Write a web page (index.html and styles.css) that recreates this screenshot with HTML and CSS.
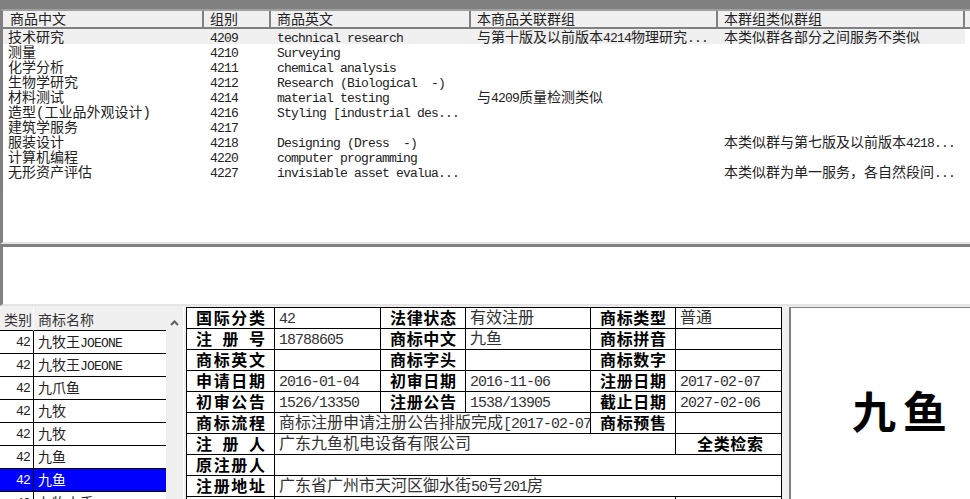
FILE: index.html
```html
<!DOCTYPE html>
<html>
<head>
<title>商标查询</title>
<link rel="stylesheet" href="styles.css">
</head>
<body>

  <div class="title-bar"></div>

  <div class="group-list">
    <div class="group-row group-head">
      <div>商品中文</div>
      <div>组别</div>
      <div>商品英文</div>
      <div>本商品关联群组</div>
      <div>本群组类似群组</div>
      <div></div>
    </div>
    <div class="group-row current">
      <div>技术研究</div>
      <div class="en">4209</div>
      <div class="en">technical research</div>
      <div>与第十版及以前版本<span class="en">4214</span>物理研究<span class="en">...</span></div>
      <div>本类似群各部分之间服务不类似</div>
    </div>
    <div class="group-row">
      <div>测量</div><div class="en">4210</div><div class="en">Surveying</div><div></div><div></div>
    </div>
    <div class="group-row">
      <div>化学分析</div><div class="en">4211</div><div class="en">chemical analysis</div><div></div><div></div>
    </div>
    <div class="group-row">
      <div>生物学研究</div><div class="en">4212</div><div class="en">Research (Biological  -)</div><div></div><div></div>
    </div>
    <div class="group-row">
      <div>材料测试</div><div class="en">4214</div><div class="en">material testing</div><div>与<span class="en">4209</span>质量检测类似</div><div></div>
    </div>
    <div class="group-row">
      <div>造型(工业品外观设计)</div><div class="en">4216</div><div class="en">Styling [industrial des...</div><div></div><div></div>
    </div>
    <div class="group-row">
      <div>建筑学服务</div><div class="en">4217</div><div></div><div></div><div></div>
    </div>
    <div class="group-row">
      <div>服装设计</div><div class="en">4218</div><div class="en">Designing (Dress  -)</div><div></div><div>本类似群与第七版及以前版本<span class="en">4218...</span></div>
    </div>
    <div class="group-row">
      <div>计算机编程</div><div class="en">4220</div><div class="en">computer programming</div><div></div><div></div>
    </div>
    <div class="group-row">
      <div>无形资产评估</div><div class="en">4227</div><div class="en">invisiable asset evalua...</div><div></div><div>本类似群为单一服务，各自然段间<span class="en">...</span></div>
    </div>
  </div>

  <div class="memo"></div>

  <div class="bottom">
    <div class="mark-list">
      <table class="mark-table">
        <colgroup>
          <col class="m-num"><col>
        </colgroup>
        <thead>
          <tr><th class="num">类别</th><th>商标名称</th></tr>
        </thead>
        <tbody>
          <tr><td class="num en">42</td><td>九牧王<span class="en">JOEONE</span></td></tr>
          <tr><td class="num en">42</td><td>九牧王<span class="en">JOEONE</span></td></tr>
          <tr><td class="num en">42</td><td>九爪鱼</td></tr>
          <tr><td class="num en">42</td><td>九牧</td></tr>
          <tr><td class="num en">42</td><td>九牧</td></tr>
          <tr><td class="num en">42</td><td>九鱼</td></tr>
          <tr class="selected"><td class="num en">42</td><td>九鱼</td></tr>
          <tr><td class="num en">42</td><td>九牧水手</td></tr>
        </tbody>
      </table>
    </div>

    <div class="scrollbar">
      <svg width="9" height="6" viewBox="0 0 9 6"><path d="M1 5 L4.5 1.5 L8 5" fill="none" stroke="#606060" stroke-width="2"/></svg>
    </div>

    <div class="splitter"></div>

    <table class="detail">
      <colgroup>
        <col class="d-label"><col class="d-value"><col class="d-label2"><col class="d-value2"><col class="d-label2"><col class="d-value">
      </colgroup>
      <tr>
        <th>国际分类</th><td class="en">42</td>
        <th>法律状态</th><td>有效注册</td>
        <th>商标类型</th><td>普通</td>
      </tr>
      <tr>
        <th>注册号</th><td class="en">18788605</td>
        <th>商标中文</th><td>九鱼</td>
        <th>商标拼音</th><td></td>
      </tr>
      <tr>
        <th>商标英文</th><td></td>
        <th>商标字头</th><td></td>
        <th>商标数字</th><td></td>
      </tr>
      <tr>
        <th>申请日期</th><td class="en">2016-01-04</td>
        <th>初审日期</th><td class="en">2016-11-06</td>
        <th>注册日期</th><td class="en">2017-02-07</td>
      </tr>
      <tr>
        <th>初审公告</th><td class="en">1526/13350</td>
        <th>注册公告</th><td class="en">1538/13905</td>
        <th>截止日期</th><td class="en">2027-02-06</td>
      </tr>
      <tr>
        <th>商标流程</th>
        <td colspan="3">商标注册申请注册公告排版完成<span class="en">[2017-02-07</span></td>
        <th>商标预售</th><td></td>
      </tr>
      <tr>
        <th>注册人</th>
        <td colspan="4">广东九鱼机电设备有限公司</td>
        <th class="search">全类检索</th>
      </tr>
      <tr>
        <th>原注册人</th>
        <td colspan="5"></td>
      </tr>
      <tr>
        <th>注册地址</th>
        <td colspan="5">广东省广州市天河区御水街<span class="en">50</span>号<span class="en">201</span>房</td>
      </tr>
      <tr>
        <th></th>
        <td colspan="4" class="flag-cell"><span class="flag"></span></td>
        <td></td>
      </tr>
    </table>

    <div class="mark-image">
      <span class="logo">九鱼</span>
    </div>
  </div>

</body>
</html>
```

FILE: styles.css
```css
html, body {
  height: 100%;
}

body {
  margin: 0;
  width: 970px;
  height: 499px;
  overflow: hidden;
  background-color: #f0f0f0;
  color: #222;
  font-family: "Liberation Mono", "Noto Sans CJK SC", monospace;
  font-size: 14px;
}

table {
  table-layout: fixed;
  border-spacing: 0;
}

th {
  font-weight: normal;
  text-align: left;
}

td, th {
  padding: 0;
  white-space: pre;
  overflow: hidden;
}

/* latin text sits at half the chinese width, tall and narrow */
.en {
  font-family: "Liberation Mono", monospace;
  font-size: 0.93em;
  letter-spacing: -0.0624em;
  line-height: 1;
}

.title-bar {
  height: 9px;
  background-color: #808080;
}

/* upper list */
.group-list {
  height: 231px;
  background-color: #fff;
  border-top: 2px solid #a0a0a0;
  border-left: 3px solid #808080;
  border-bottom: 2px solid #e4e4e4;
}

.group-row {
  display: grid;
  grid-template-columns: 201px 67px 200px 247px 247px 5px;
  height: 15px;
}

.group-row > div {
  height: 13px;
  padding: 2px 0 0 6px;
  line-height: 15px;
  white-space: pre;
}

.group-row > div:first-child {
  padding-left: 5px;
}

.group-row.current > div {
  background-color: #f0f0f0;
}

.group-head {
  height: 18px;
}

.group-head > div {
  height: 14px;
  line-height: 14px;
  background-color: #f0f0f0;
  border-right: 2px solid #808080;
  border-bottom: 2px solid #808080;
}

.group-head > div:first-child {
  padding-left: 7px;
}

/* empty notes box */
.memo {
  height: 57px;
  background-color: #fff;
  border-top: 3px solid #808080;
  border-left: 3px solid #808080;
  border-bottom: 2px solid #e4e4e4;
}

/* lower part */
.bottom {
  display: flex;
  height: 193px;
}

.mark-list {
  width: 166px;
  padding-top: 2px;
  flex-shrink: 0;
}

.mark-table {
  width: 166px;
  border-collapse: separate;
  background-color: #fff;
}

.m-num { width: 34px; }

.mark-table th {
  height: 18px;
  line-height: 18px;
  padding: 4px 0 0 4px;
  background-color: #f0f0f0;
  color: #333;
  border-bottom: 1px solid #000;
}

.mark-table th.num {
  padding-right: 0;
  border-right: 1px solid #fff;
}

.mark-table td {
  height: 20px;
  line-height: 20px;
  padding: 2px 0 0 4px;
  border-bottom: 1px solid #000;
}

.mark-table td.num {
  padding: 2px 3px 0 0;
  text-align: right;
  border-right: 1px solid #000;
}

.mark-table .selected td {
  background-color: #0000ff;
  color: #fff;
}

.scrollbar {
  width: 17px;
  padding-top: 8px;
  text-align: center;
  flex-shrink: 0;
}

.splitter {
  width: 3px;
  border-left: 1px solid #fff;
  box-sizing: border-box;
  flex-shrink: 0;
}

.detail {
  width: 596px;
  height: 190px;
  margin-top: 1px;
  flex-shrink: 0;
  border-collapse: collapse;
  background-color: #fff;
  font-size: 16px;
}

.d-label { width: 88px; }
.d-value { width: 106px; }
.d-label2 { width: 85px; }
.d-value2 { width: 125px; }

.detail td, .detail th {
  border: 1px solid #000;
}

.detail td {
  height: 18px;
  line-height: 18px;
  padding: 2px 0 0 4px;
  color: #333;
  vertical-align: top;
}

.detail th {
  height: 16px;
  line-height: 16px;
  padding: 4px 9px 0;
  font-weight: bold;
  text-align: justify;
  text-align-last: justify;
  color: #000;
}

.detail th.search {
  padding-left: 21px;
  padding-right: 18px;
}

.flag-cell {
  text-align: right;
  padding-right: 1px;
}

.flag {
  display: inline-block;
  width: 19px;
  height: 3px;
  vertical-align: top;
  background-color: #4a7fc0;
}

.mark-image {
  flex: 1;
  margin: 1px 0 0 7px;
  background-color: #fff;
  border-left: 2px solid #808080;
  border-top: 1px solid #808080;
  padding-top: 79px;
  padding-left: 61px;
}

.logo {
  font-family: "Noto Sans CJK SC", sans-serif;
  font-size: 44px;
  font-weight: bold;
  line-height: 46px;
  letter-spacing: 7px;
  color: #000;
}
```
